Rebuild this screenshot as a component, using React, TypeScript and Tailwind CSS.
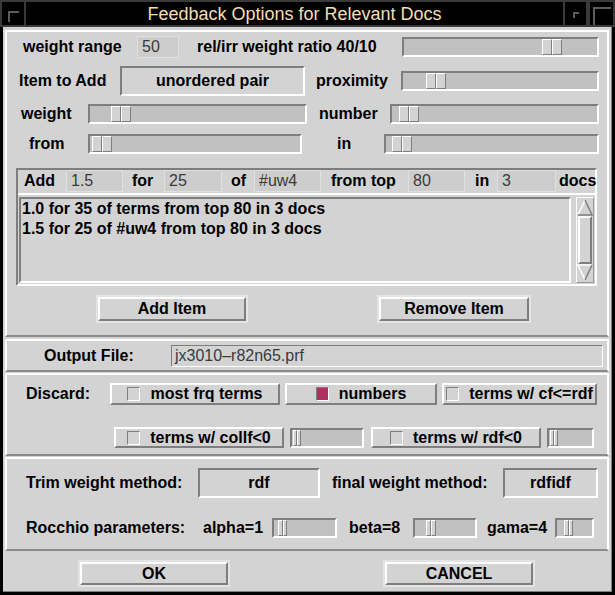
import type { ReactNode } from "react";

const bevelOut = "border-t-white border-l-white border-b-[#7e7e7e] border-r-[#7e7e7e]";
const bevelIn = "border-t-[#7e7e7e] border-l-[#7e7e7e] border-b-white border-r-white";
const panel = "border-2 border-t-white border-l-white border-b-[#8a8a8a] border-r-white";

function Label({ className = "", children }: { className?: string; children: ReactNode }) {
  return <div className={`flex h-full shrink-0 items-center font-bold ${className}`}>{children}</div>;
}

function Field({ className = "", children }: { className?: string; children: ReactNode }) {
  return (
    <div
      className={`flex h-[22px] shrink-0 items-center border border-[#e0e0e0] bg-[#cdcdcd] pl-[4px] text-[#3a3a3a] ${className}`}
    >
      {children}
    </div>
  );
}

function Box({ className = "", children }: { className?: string; children: ReactNode }) {
  return (
    <div className={`flex h-[30px] shrink-0 items-center justify-center border-2 font-bold ${bevelIn} ${className}`}>
      {children}
    </div>
  );
}

function Slider({ className = "", at, thumb = 20 }: { className?: string; at: number; thumb?: number }) {
  const half = thumb / 2;
  return (
    <div className={`flex h-[20px] shrink-0 border-2 bg-[#c1c1c1] ${bevelIn} ${className}`}>
      <div className="flex h-full" style={{ marginLeft: at }}>
        <span className={`h-full border bg-[#d3d3d3] ${bevelOut}`} style={{ width: half }} />
        <span className={`h-full border bg-[#d3d3d3] ${bevelOut}`} style={{ width: half }} />
      </div>
    </div>
  );
}

function Btn({ className = "", children }: { className?: string; children: ReactNode }) {
  return (
    <button className={`shrink-0 border-2 border-[#e4e4e4] p-0 ${className}`}>
      <span className={`flex h-full items-center justify-center border-2 bg-[#d3d3d3] font-bold ${bevelOut}`}>
        {children}
      </span>
    </button>
  );
}

function Check({ className = "", label, on = false }: { className?: string; label: string; on?: boolean }) {
  return (
    <div className={`flex h-full shrink-0 items-center justify-center gap-[10px] border-2 ${bevelOut} ${className}`}>
      <span className={`h-[14px] w-[13px] border ${bevelIn} ${on ? "bg-[#b03060]" : "bg-[#d3d3d3]"}`} />
      <span className="font-bold">{label}</span>
    </div>
  );
}

function Corner({ size }: { size: number }) {
  return (
    <svg width={size} height={size} viewBox={`0 0 ${size} ${size}`} className="block">
      <path d={`M1 ${size} V1 H${size}`} stroke="#5c5c5c" strokeWidth="2" fill="none" />
    </svg>
  );
}

function TitleBar() {
  return (
    <div className="flex h-[27px] bg-black">
      <div className="flex w-[26px] items-start border-2 border-[#3a3a3a] pl-[6px] pt-[9px]">
        <Corner size={11} />
      </div>
      <div className="flex w-[537px] items-center justify-center border-y-2 border-[#3a3a3a] pt-[1px] text-[18px] text-[#f5deb3]">
        Feedback Options for Relevant Docs
      </div>
      <div className="flex w-[25px] items-start border-2 border-[#3a3a3a] pl-[8px] pt-[10px]">
        <Corner size={6} />
      </div>
      <div className="flex w-[27px] items-start border-2 border-[#3a3a3a] pl-[3px] pt-[5px]">
        <Corner size={18} />
      </div>
    </div>
  );
}

function Scrollbar() {
  return (
    <div className="flex h-full w-[18px] shrink-0 flex-col border border-t-white border-l-white border-b-[#9a9a9a] border-r-[#9a9a9a]">
      <svg width="16" height="18" viewBox="0 0 16 18" className="block shrink-0">
        <path d="M1 17 L8 2" stroke="white" strokeWidth="1.5" fill="none" />
        <path d="M8 2 L15 17 H1" stroke="#7e7e7e" strokeWidth="1.5" fill="none" />
      </svg>
      <div className={`mx-[1px] flex-1 border-2 bg-[#d3d3d3] ${bevelOut}`} />
      <svg width="16" height="18" viewBox="0 0 16 18" className="block shrink-0">
        <path d="M15 1 H1 L8 16" stroke="white" strokeWidth="1.5" fill="none" />
        <path d="M8 16 L15 1" stroke="#7e7e7e" strokeWidth="1.5" fill="none" />
      </svg>
    </div>
  );
}

const items = [
  "1.0 for 35 of terms from top 80 in 3 docs",
  "1.5 for 25 of #uw4 from top 80 in 3 docs",
];

export default function App() {
  return (
    <div className="h-[595px] w-[615px] overflow-hidden bg-black font-['Liberation_Sans',Arial,sans-serif] text-[16px] leading-none text-black">
      <TitleBar />
      <div className="ml-[3px] flex h-[565px] w-[609px] flex-col border-r border-b border-[#7e7e7e] bg-[#d3d3d3] px-[2px] pt-[3px]">
        {/* options panel */}
        <section className={`flex h-[307px] flex-col ${panel}`}>
          <div className="mt-[4px] flex h-[22px] items-center">
            <Label className="ml-[16px] w-[114px]">weight range</Label>
            <Field className="w-[42px]">50</Field>
            <Label className="ml-[18px] w-[205px]">rel/irr weight ratio 40/10</Label>
            <Slider className="w-[197px]" at={138} />
          </div>
          <div className="mt-[8px] flex h-[30px] items-center">
            <Label className="ml-[12px] w-[101px]">Item to Add</Label>
            <Box className="w-[185px]">unordered pair</Box>
            <Label className="w-[96px] pl-[11px]">proximity</Label>
            <Slider className="w-[198px]" at={23} />
          </div>
          <div className="mt-[8px] flex h-[20px] items-center">
            <Label className="ml-[14px] w-[67px]">weight</Label>
            <Slider className="w-[219px]" at={21} />
            <Label className="w-[83px] pl-[12px]">number</Label>
            <Slider className="w-[209px]" at={7} />
          </div>
          <div className="mt-[10px] flex h-[20px] items-center">
            <Label className="ml-[22px] w-[59px]">from</Label>
            <Slider className="w-[214px]" at={2} />
            <Label className="w-[82px] pl-[35px]">in</Label>
            <Slider className="w-[215px]" at={6} />
          </div>

          <div className={`ml-[9px] mt-[14px] flex h-[118px] w-[581px] flex-col border-2 ${bevelIn}`}>
            <div className="flex h-[25px] items-center border-b-2 border-white pb-[1px]">
              <Label className="w-[48px] pl-[6px]">Add</Label>
              <Field className="w-[57px]">1.5</Field>
              <Label className="w-[41px] pl-[9px]">for</Label>
              <Field className="w-[58px]">25</Field>
              <Label className="w-[32px] pl-[9px]">of</Label>
              <Field className="w-[67px]">#uw4</Field>
              <Label className="w-[87px] pl-[10px]">from top</Label>
              <Field className="w-[57px]">80</Field>
              <Label className="w-[32px] pl-[10px]">in</Label>
              <Field className="w-[59px]">3</Field>
              <Label className="pl-[3px]">docs</Label>
            </div>
            <div className="mt-[2px] flex h-[86px]">
              <div className={`ml-[1px] w-[552px] border-2 px-[1px] font-bold ${bevelIn}`}>
                {items.map((item) => (
                  <div key={item} className="h-[20px] leading-[20px]">
                    {item}
                  </div>
                ))}
              </div>
              <div className="ml-[5px]">
                <Scrollbar />
              </div>
            </div>
          </div>

          <div className="mt-[9px] flex h-[28px]">
            <Btn className="ml-[89px] w-[152px]">Add Item</Btn>
            <Btn className="ml-[129px] w-[154px]">Remove Item</Btn>
          </div>
        </section>

        {/* output file */}
        <section className={`mt-[2px] flex h-[33px] items-center ${panel}`}>
          <Label className="w-[164px] pl-[37px]">Output File:</Label>
          <div className={`flex h-[22px] w-[432px] items-center border bg-[#d3d3d3] pl-[3px] text-[#3a3a3a] ${bevelIn}`}>
            jx3010–r82n65.prf
          </div>
        </section>

        {/* discard */}
        <section className={`mt-[1px] flex h-[83px] flex-col ${panel}`}>
          <div className="mt-[8px] flex h-[22px] items-center">
            <Label className="w-[103px] pl-[19px]">Discard:</Label>
            <Check className="w-[170px]" label="most frq terms" />
            <Check className="ml-[5px] w-[152px]" label="numbers" on />
            <Check className="ml-[5px] w-[155px]" label="terms w/ cf<=rdf" />
          </div>
          <div className="mt-[22px] flex h-[21px] items-center">
            <Check className="ml-[107px] w-[170px]" label="terms w/ collf<0" />
            <Slider className="ml-[6px] w-[74px]" at={1} thumb={8} />
            <Check className="ml-[7px] w-[170px]" label="terms w/ rdf<0" />
            <Slider className="ml-[6px] w-[47px]" at={1} thumb={8} />
          </div>
        </section>

        {/* weights */}
        <section className={`mt-[1px] flex h-[94px] flex-col ${panel}`}>
          <div className="mt-[9px] flex h-[30px] items-center">
            <Label className="w-[191px] pl-[19px]">Trim weight method:</Label>
            <Box className="w-[122px]">rdf</Box>
            <Label className="w-[183px] pl-[12px]">final weight method:</Label>
            <Box className="w-[95px]">rdfidf</Box>
          </div>
          <div className="mt-[18px] flex h-[24px] items-center">
            <Label className="w-[196px] pl-[19px]">Rocchio parameters:</Label>
            <Label className="w-[69px]">alpha=1</Label>
            <Slider className="w-[65px]" at={4} thumb={9} />
            <Label className="w-[76px] pl-[12px]">beta=8</Label>
            <Slider className="w-[64px]" at={11} thumb={10} />
            <Label className="w-[78px] pl-[10px]">gama=4</Label>
            <Slider className="w-[39px]" at={7} thumb={9} />
          </div>
        </section>

        <div className="mt-[9px] flex h-[27px]">
          <Btn className="ml-[73px] w-[152px]">OK</Btn>
          <Btn className="ml-[153px] w-[152px]">CANCEL</Btn>
        </div>
      </div>
    </div>
  );
}
